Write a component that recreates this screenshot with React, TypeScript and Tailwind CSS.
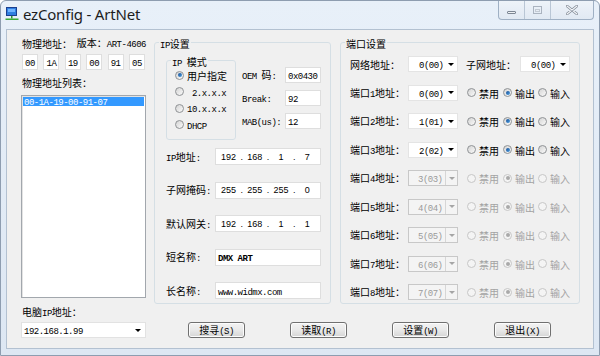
import React from 'react';

// split mixed text: CJK runs in the CJK face, ascii in a narrow mono (SimSun-like widths)
const CJK = /([\u3000-\u303f\u4e00-\u9fff\uff00-\uffef]+)/;

const Txt: React.FC<{ s: string; className?: string }> = ({ s, className = '' }) => (
  <span className={`whitespace-pre ${className}`}>
    {s.split(CJK).filter(Boolean).map((p, i) =>
      CJK.test(p) ? (
        <span key={i} className="font-['Noto_Sans_CJK_SC',sans-serif] text-[10px]">{p}</span>
      ) : (
        <span key={i} className="font-['Liberation_Mono',monospace] text-[9px] tracking-[-0.5px]">{p}</span>
      )
    )}
  </span>
);

const Radio: React.FC<{ checked?: boolean; disabled?: boolean }> = ({ checked, disabled }) => (
  <div
    className={`w-[9px] h-[9px] shrink-0 rounded-full border flex items-center justify-center ${
      disabled
        ? 'border-[#c6c6c6] bg-[#f4f4f4]'
        : 'border-[#8f9295] bg-gradient-to-br from-[#d4d4d4] to-[#fafafa]'
    }`}
  >
    {checked && (
      <div
        className={`w-[4px] h-[4px] rounded-full ${
          disabled ? 'bg-[#a9a9a9]' : 'bg-gradient-to-br from-[#1b4f93] to-[#4aa0e6]'
        }`}
      />
    )}
  </div>
);

const Arrow: React.FC<{ dim?: boolean }> = ({ dim }) => (
  <div
    className={`w-0 h-0 border-x-[3px] border-x-transparent border-t-[3px] ${
      dim ? 'border-t-[#a5a5a5]' : 'border-t-black'
    }`}
  />
);

const Combo: React.FC<{ value: string; disabled?: boolean }> = ({ value, disabled }) =>
  disabled ? (
    <div className="w-[50px] h-[16px] flex items-center border border-[#c8c8c8] bg-[#f4f4f4] text-[#9a9a9a]">
      <div className="flex-1 pl-[9px] leading-[14px]">
        <Txt s={value} />
      </div>
      <div className="w-[12px] h-full border-l border-[#d6d6d6] flex items-center justify-center">
        <Arrow dim />
      </div>
    </div>
  ) : (
    <div className="w-[50px] h-[16px] flex items-center border border-[#e4e4e4] bg-white">
      <div className="flex-1 pl-[10px] leading-[14px]">
        <Txt s={value} />
      </div>
      <div className="w-[12px] flex items-center justify-center">
        <Arrow />
      </div>
    </div>
  );

const Box: React.FC<{ children?: React.ReactNode; className?: string }> = ({ children, className = '' }) => (
  <div className={`bg-white border border-[#dedede] flex items-center ${className}`}>{children}</div>
);

const IpBox: React.FC<{ parts: string[] }> = ({ parts }) => (
  <Box className="w-[106px] h-[17px] px-[1px] font-['Liberation_Sans',sans-serif] text-[9px]">
    {parts.map((p, i) => (
      <React.Fragment key={i}>
        {i > 0 && <span className="w-[3px] text-center">.</span>}
        <span className="flex-1 text-center">{p}</span>
      </React.Fragment>
    ))}
  </Box>
);

const Button: React.FC<{ label: string }> = ({ label }) => (
  <div className="w-[57px] h-[16px] rounded-[3px] border border-[#707070] bg-gradient-to-b from-[#f3f3f3] via-[#e9e9e9] to-[#d5d5d5] shadow-[inset_0_0_0_1px_#fcfcfc] flex items-center justify-center leading-[12px]">
    <Txt s={label} />
  </div>
);

const TitleBar: React.FC = () => (
  <div className="h-[28px] flex items-start">
    <div className="h-full flex items-center pl-[4px] pb-[3px]">
      <svg width="15" height="15" viewBox="0 0 15 15">
        <rect x="1.5" y="1.5" width="10" height="8" fill="#2f7fe0" stroke="#1b3f8f" />
        <rect x="3" y="3" width="7" height="3" fill="#6fb3ff" />
        <rect x="6" y="10" width="1.5" height="2.5" fill="#2f9a2f" />
        <rect x="0.5" y="12.5" width="13" height="1.5" fill="#3aaa35" />
      </svg>
      <span className="ml-[3px] font-['Noto_Sans',sans-serif] text-[15px] text-[#1d1d1d] tracking-[-0.2px]">
        ezConfig - ArtNet
      </span>
    </div>
    <div className="ml-auto mr-[5px] w-[96px] h-[19px] flex border border-t-0 border-[#9fb0c4] rounded-b-[4px] bg-gradient-to-b from-[#eef3f9] to-[#e1e9f3] overflow-hidden">
      <div className="w-[26px] h-full border-r border-[#b9c6d5] flex items-center justify-center">
        <div className="w-[9px] h-[3px] mt-[5px] border border-[#7d8794] bg-[#eef1f4] rounded-[1px]" />
      </div>
      <div className="w-[26px] h-full border-r border-[#b9c6d5] flex items-center justify-center">
        <div className="w-[9px] h-[8px] border border-[#aab3bf] flex items-center justify-center">
          <div className="w-[5px] h-[3px] border border-[#c3cad3]" />
        </div>
      </div>
      <div className="flex-1 h-full flex items-center justify-center">
        <svg width="12" height="10" viewBox="0 0 12 10">
          <path d="M1 1 L11 9 M11 1 L1 9" stroke="#7f8894" strokeWidth="2.6" strokeLinecap="round" />
          <path d="M1 1 L11 9 M11 1 L1 9" stroke="#f4f6f9" strokeWidth="1.2" strokeLinecap="round" />
        </svg>
      </div>
    </div>
  </div>
);

const macParts = ['00', '1A', '19', '00', '91', '05'];

const ports = [
  { n: 1, v: '0(00)', on: true },
  { n: 2, v: '1(01)', on: true },
  { n: 3, v: '2(02)', on: true },
  { n: 4, v: '3(03)', on: false },
  { n: 5, v: '4(04)', on: false },
  { n: 6, v: '5(05)', on: false },
  { n: 7, v: '6(06)', on: false },
  { n: 8, v: '7(07)', on: false },
];

export default function App() {
  return (
    <div className="w-[600px] h-[356px] flex flex-col bg-gradient-to-b from-[#e8f0f9] to-[#dde7f3] border border-[#8e9db0] rounded-t-[6px] overflow-hidden text-black leading-[12px]">
      <TitleBar />

      <div className="mx-[5px] h-[320px] bg-[#f0f0f0] border border-[#b3c1d1] flex">
        {/* left column */}
        <div className="ml-[14px] w-[125px] pt-[7px] flex flex-col">
          <div className="h-[12px] flex items-center pl-[1px]">
            <div className="w-[58px]"><Txt s="物理地址：" /></div>
            <Txt s="版本：ART-4606" />
          </div>
          <div className="mt-[5px] h-[16px] flex gap-[5.4px] pl-[1px]">
            {macParts.map((m, i) => (
              <Box key={i} className="w-[16px] h-[16px] justify-center">
                <Txt s={m} />
              </Box>
            ))}
          </div>
          <div className="mt-[5px] h-[12px] pl-[1px]"><Txt s="物理地址列表：" /></div>
          <div className="mt-[8px] h-[203px] bg-white border border-[#a2a7ad] p-[1px] shadow-[inset_1px_1px_0_#e3e3e3]">
            <div className="h-[9px] bg-[#3399ff] text-white flex items-center pl-[1px] leading-[9px]">
              <Txt s="00-1A-19-00-91-07" />
            </div>
          </div>
          <div className="mt-[6px] h-[12px] pl-[1px]"><Txt s="电脑IP地址：" /></div>
          <div className="mt-[6px] h-[16px] flex items-center bg-white border border-[#e2e2e2]">
            <div className="flex-1 pl-[2px]"><Txt s="192.168.1.99" /></div>
            <div className="w-[14px] flex justify-center"><Arrow /></div>
          </div>
        </div>

        {/* right area */}
        <div className="ml-[8px] pt-[6px] flex flex-col">
          <div className="flex gap-[9px]">
            {/* IP settings */}
            <fieldset className="w-[177px] h-[268px] border border-[#d5dfe5] rounded-[3px]">
              <legend className="ml-[4px] px-[1px] h-[12px]"><Txt s="IP设置" /></legend>
              <div className="flex items-start">
                <fieldset className="ml-[11px] mt-[6px] w-[70px] h-[86px] border border-[#d5dfe5] rounded-[3px]">
                  <legend className="ml-[4px] px-[1px] h-[12px]"><Txt s="IP 模式" /></legend>
                  <div className="pl-[8px] pt-[1px] flex flex-col">
                    {[
                      { t: '用户指定', c: true },
                      { t: ' 2.x.x.x', c: false },
                      { t: '10.x.x.x', c: false },
                      { t: 'DHCP', c: false },
                    ].map((r) => (
                      <div key={r.t} className="h-[16.5px] flex items-center gap-[3px] leading-[12px]">
                        <Radio checked={r.c} />
                        <Txt s={r.t} />
                      </div>
                    ))}
                  </div>
                </fieldset>
                <div className="ml-[6px] mt-[19px] flex flex-col gap-[7px]">
                  {[
                    { l: 'OEM 码:', v: '0x0430' },
                    { l: 'Break:', v: '92' },
                    { l: 'MAB(us):', v: '12' },
                  ].map((r) => (
                    <div key={r.l} className="h-[16px] flex items-center">
                      <div className="w-[43px]"><Txt s={r.l} /></div>
                      <Box className="w-[36px] h-[16px] pl-[2px]"><Txt s={r.v} /></Box>
                    </div>
                  ))}
                </div>
              </div>
              <div className="ml-[11px] mt-[8px] flex flex-col gap-[16.5px]">
                <div className="h-[17px] flex items-center">
                  <div className="w-[49px]"><Txt s="IP地址:" /></div>
                  <IpBox parts={['192', '168', '1', '7']} />
                </div>
                <div className="h-[17px] flex items-center">
                  <div className="w-[49px]"><Txt s="子网掩码:" /></div>
                  <IpBox parts={['255', '255', '255', '0']} />
                </div>
                <div className="h-[17px] flex items-center">
                  <div className="w-[49px]"><Txt s="默认网关:" /></div>
                  <IpBox parts={['192', '168', '1', '1']} />
                </div>
                <div className="h-[17px] flex items-center">
                  <div className="w-[49px]"><Txt s="短名称:" /></div>
                  <Box className="w-[106px] h-[17px] pl-[2px]"><Txt s="DMX ART" className="font-bold" /></Box>
                </div>
                <div className="h-[17px] flex items-center">
                  <div className="w-[49px]"><Txt s="长名称:" /></div>
                  <Box className="w-[106px] h-[17px] pl-[2px]"><Txt s="www.widmx.com" /></Box>
                </div>
              </div>
            </fieldset>

            {/* port settings */}
            <fieldset className="w-[240px] h-[268px] border border-[#d5dfe5] rounded-[3px]">
              <legend className="ml-[4px] px-[1px] h-[12px]"><Txt s="端口设置" /></legend>
              <div className="pl-[9px] pt-[8px] flex flex-col gap-[12.5px]">
                <div className="h-[16px] flex items-center">
                  <div className="w-[58px]"><Txt s="网络地址：" /></div>
                  <Combo value="0(00)" />
                  <div className="ml-[8px] w-[54px]"><Txt s="子网地址：" /></div>
                  <Combo value="0(00)" />
                </div>
                {ports.map((p) => (
                  <div key={p.n} className="h-[16px] flex items-center">
                    <div className="w-[58px]"><Txt s={`端口${p.n}地址：`} /></div>
                    <Combo value={p.v} disabled={!p.on} />
                    <div className={`ml-[9px] flex items-center ${p.on ? 'text-black' : 'text-[#a3a3a3]'}`}>
                      <div className="w-[36px] flex items-center gap-[3px]">
                        <Radio disabled={!p.on} />
                        <Txt s="禁用" />
                      </div>
                      <div className="w-[35px] flex items-center gap-[3px]">
                        <Radio checked disabled={!p.on} />
                        <Txt s="输出" />
                      </div>
                      <div className="flex items-center gap-[3px]">
                        <Radio disabled={!p.on} />
                        <Txt s="输入" />
                      </div>
                    </div>
                  </div>
                ))}
              </div>
            </fieldset>
          </div>

          <div className="mt-[18px] pl-[34px] flex gap-[45px]">
            <Button label="搜寻(S)" />
            <Button label="读取(R)" />
            <Button label="设置(W)" />
            <Button label="退出(X)" />
          </div>
        </div>
      </div>
    </div>
  );
}
